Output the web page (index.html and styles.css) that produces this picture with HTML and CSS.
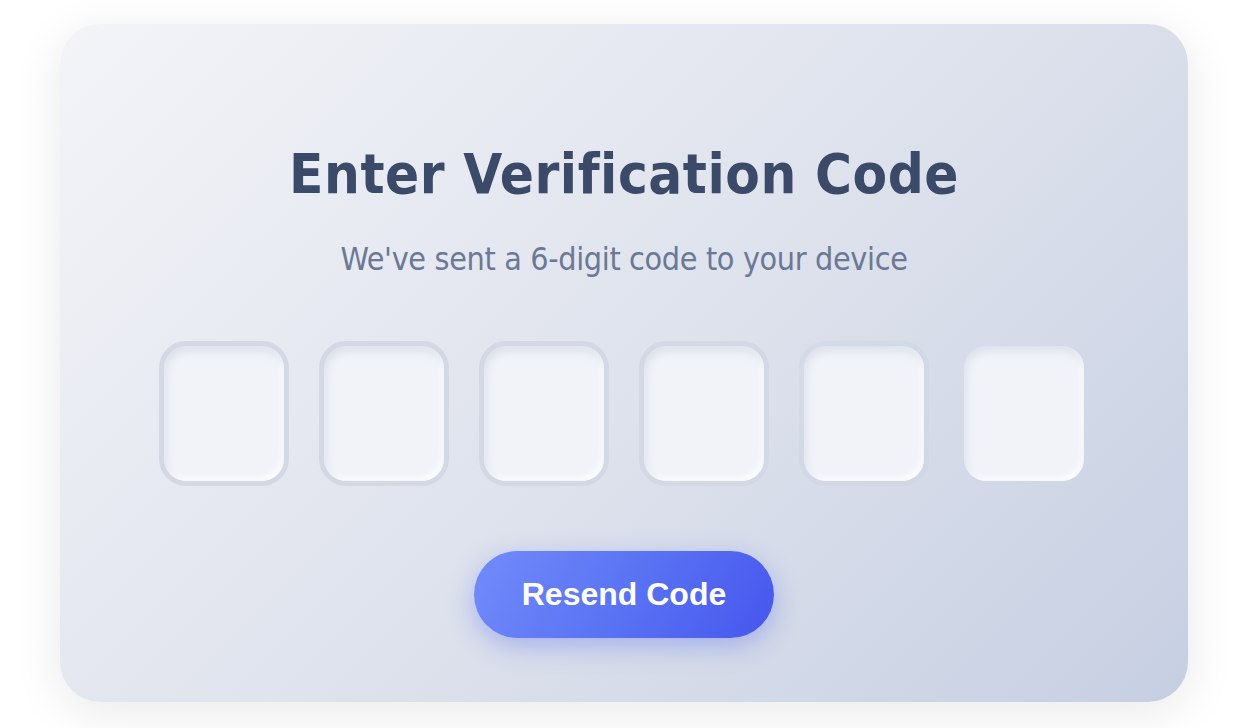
FILE: index.html
```html
<!DOCTYPE html>
<html lang="en">
<head>
<meta charset="utf-8">
<title>Enter Verification Code</title>
<link rel="stylesheet" href="styles.css">
</head>
<body>
  <main class="card">
    <h1 class="title">Enter Verification Code</h1>
    <p class="subtitle">We've sent a 6-digit code to your device</p>
    <div class="code-row">
      <div class="digit ring-1"></div>
      <div class="digit ring-2"></div>
      <div class="digit ring-3"></div>
      <div class="digit ring-4"></div>
      <div class="digit ring-5"></div>
      <div class="digit ring-6"></div>
    </div>
    <button class="resend" type="button">Resend Code</button>
  </main>
</body>
</html>
```

FILE: styles.css
```css
* { box-sizing: border-box; }

html, body {
  margin: 0;
  padding: 0;
  background: #ffffff;
}

body {
  padding: 24px 54px 26px 60px;
}

.card {
  width: 1128px;
  height: 678px;
  border-radius: 40px;
  background: linear-gradient(135deg, #f3f4f8 0%, #dfe3ed 50%, #c6cfe2 100%);
  box-shadow: 0 10px 50px rgba(0, 0, 0, 0.09);
  display: flex;
  flex-direction: column;
  align-items: center;
  padding-top: 116px;
}

.title {
  margin: 0;
  font-family: "DejaVu Sans Condensed", "DejaVu Sans", sans-serif;
  font-weight: 700;
  font-size: 56px;
  line-height: 67px;
  color: #3c4a6a;
  letter-spacing: 0.55px;
}

.subtitle {
  margin: 30px 0 0;
  font-family: "DejaVu Sans Condensed", "DejaVu Sans", sans-serif;
  font-size: 32px;
  line-height: 45px;
  color: #6b7896;
  letter-spacing: -0.35px;
}

.code-row {
  margin-top: 64px;
  display: flex;
  gap: 40px;
}

.digit {
  width: 120px;
  height: 135px;
  border-radius: 22px;
  background: #f1f3f9;
  box-shadow:
    0 0 0 5px var(--ring, transparent),
    inset 2px 5px 8px rgba(165, 175, 200, 0.28),
    inset -3px -3px 6px rgba(255, 255, 255, 0.9);
}

.ring-1, .ring-2, .ring-3, .ring-4 { --ring: #d3d8e4; }
.ring-5 { --ring: rgba(205, 212, 226, 0.45); }
.ring-6 { --ring: transparent; }

.resend {
  margin-top: 70px;
  width: 300px;
  height: 87px;
  border: none;
  border-radius: 44px;
  background: linear-gradient(120deg, #728bfa 0%, #5a73f3 50%, #4656ee 100%);
  box-shadow: 0 8px 26px rgba(82, 104, 240, 0.38);
  color: #ffffff;
  font-family: "Liberation Sans", Arial, sans-serif;
  font-weight: 700;
  font-size: 32px;
  display: flex;
  align-items: center;
  justify-content: center;
  cursor: pointer;
}
```
